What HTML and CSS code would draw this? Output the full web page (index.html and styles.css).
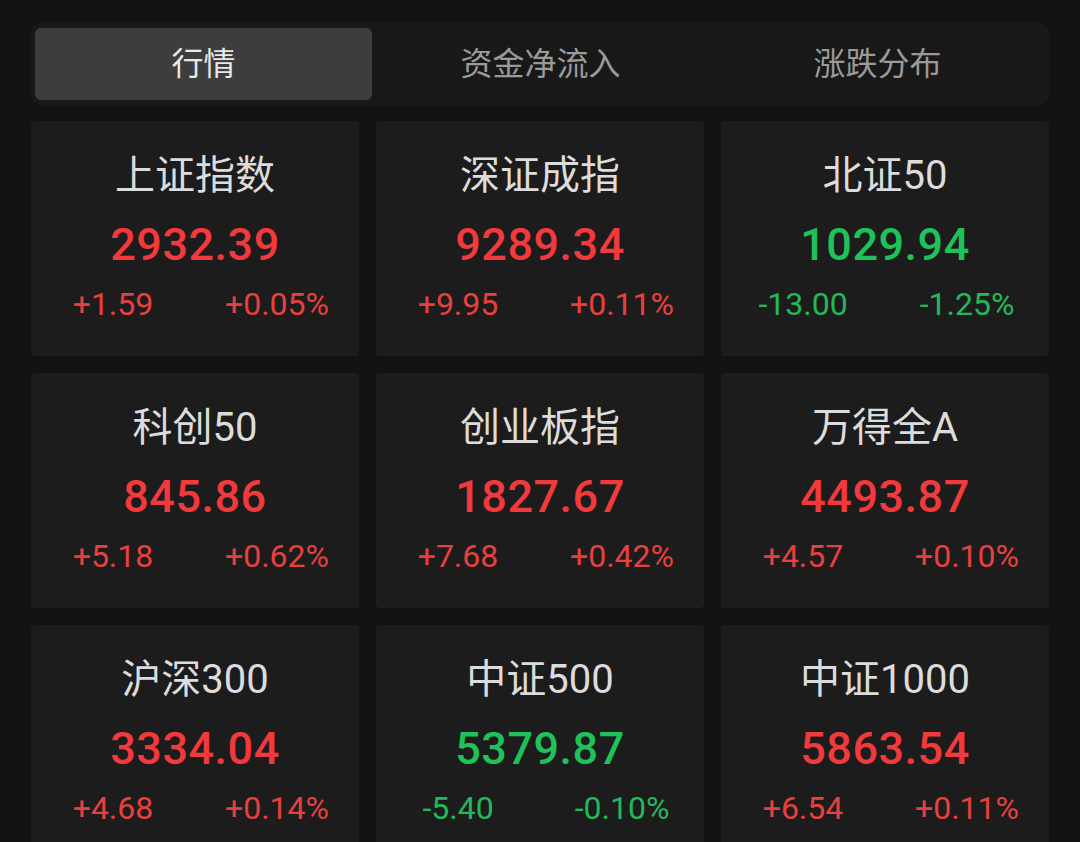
FILE: index.html
```html
<!DOCTYPE html>
<html lang="zh-CN">
<head>
<meta charset="utf-8">
<title>行情</title>
<link rel="stylesheet" href="styles.css">
</head>
<body>
<div class="page">
  <div class="tabs">
    <div class="tab active">行情</div>
    <div class="tab">资金净流入</div>
    <div class="tab">涨跌分布</div>
  </div>
  <div class="grid">
    <div class="card up">
      <div class="name">上证指数</div>
      <div class="value">2932.39</div>
      <div class="change"><span>+1.59</span><span>+0.05%</span></div>
    </div>
    <div class="card up">
      <div class="name">深证成指</div>
      <div class="value">9289.34</div>
      <div class="change"><span>+9.95</span><span>+0.11%</span></div>
    </div>
    <div class="card down">
      <div class="name">北证50</div>
      <div class="value">1029.94</div>
      <div class="change"><span>-13.00</span><span>-1.25%</span></div>
    </div>
    <div class="card up">
      <div class="name">科创50</div>
      <div class="value">845.86</div>
      <div class="change"><span>+5.18</span><span>+0.62%</span></div>
    </div>
    <div class="card up">
      <div class="name">创业板指</div>
      <div class="value">1827.67</div>
      <div class="change"><span>+7.68</span><span>+0.42%</span></div>
    </div>
    <div class="card up">
      <div class="name">万得全A</div>
      <div class="value">4493.87</div>
      <div class="change"><span>+4.57</span><span>+0.10%</span></div>
    </div>
    <div class="card up">
      <div class="name">沪深300</div>
      <div class="value">3334.04</div>
      <div class="change"><span>+4.68</span><span>+0.14%</span></div>
    </div>
    <div class="card down">
      <div class="name">中证500</div>
      <div class="value">5379.87</div>
      <div class="change"><span>-5.40</span><span>-0.10%</span></div>
    </div>
    <div class="card up">
      <div class="name">中证1000</div>
      <div class="value">5863.54</div>
      <div class="change"><span>+6.54</span><span>+0.11%</span></div>
    </div>
  </div>
</div>
</body>
</html>
```
FILE: styles.css
```css
html, body {
  margin: 0;
  padding: 0;
  background: #121212;
  height: 842px;
  overflow: hidden;
}
body {
  font-family: Roboto, "Noto Sans CJK SC", sans-serif;
}
.page {
  padding: 23px 31px 0 31px;
}
.tabs {
  display: grid;
  grid-template-columns: 1fr 1fr 1fr;
  background: #181818;
  border-radius: 10px;
  padding: 5px 3px 5px 4px;
  height: 72px;
}
.tab {
  display: flex;
  align-items: center;
  justify-content: center;
  font-family: "Noto Sans CJK SC", sans-serif;
  font-size: 32px;
  color: #9a9a9a;
  border-radius: 6px;
  padding-bottom: 6px;
  box-sizing: border-box;
}
.tab.active {
  background: #3d3d3d;
  color: #e8e8e8;
}
.grid {
  margin-top: 16px;
  display: grid;
  grid-template-columns: repeat(3, 328px);
  column-gap: 17px;
  row-gap: 17px;
}
.card {
  background: #1c1c1c;
  border-radius: 4px;
  height: 235px;
  box-sizing: border-box;
  padding-top: 31px;
  display: flex;
  flex-direction: column;
  align-items: stretch;
  text-align: center;
}
.name {
  font-family: Roboto, "Noto Sans CJK SC", sans-serif;
  font-size: 40px;
  line-height: 48px;
  color: #dcdcdc;
}
.value {
  margin-top: 17px;
  font-size: 45px;
  line-height: 56px;
  font-weight: 500;
  letter-spacing: 0.5px;
}
.change {
  margin-top: 11px;
  display: grid;
  grid-template-columns: 1fr 1fr;
  font-size: 32px;
  line-height: 40px;
}
.up .value { color: #f2393c; }
.up .change { color: #e8403f; }
.down .value { color: #1fc25a; }
.down .change { color: #22b95a; }
```
